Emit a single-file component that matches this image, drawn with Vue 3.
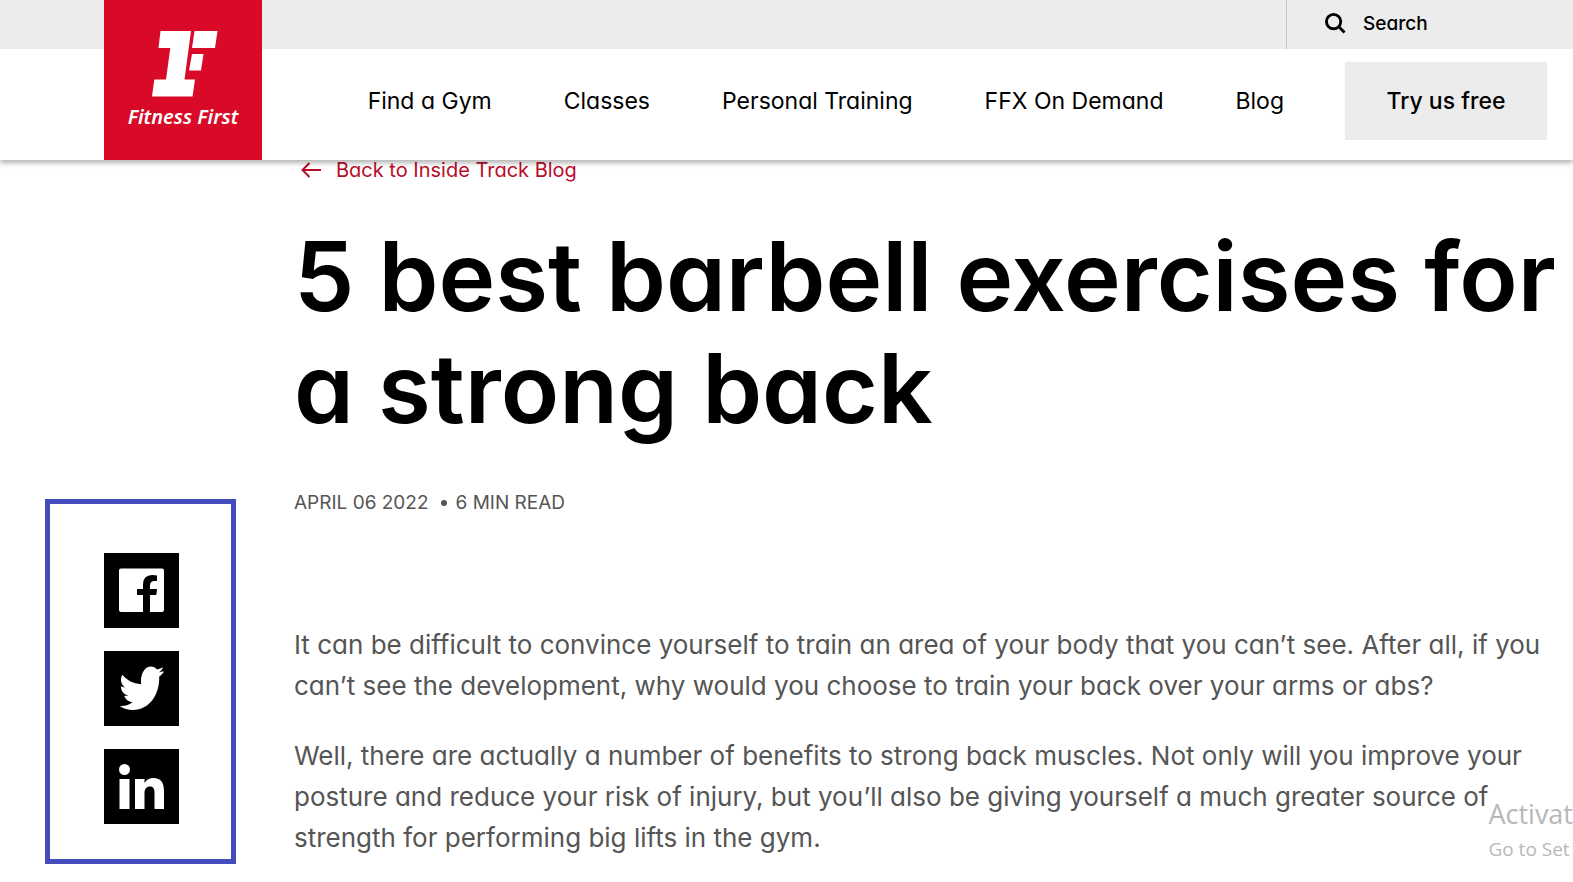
<script setup>
const links = ['Find a Gym', 'Classes', 'Personal Training', 'FFX On Demand', 'Blog']
const paragraphs = [
  'It can be difficult to convince yourself to train an area of your body that you can’t see. After all, if you can’t see the development, why would you choose to train your back over your arms or abs?',
  'Well, there are actually a number of benefits to strong back muscles. Not only will you improve your posture and reduce your risk of injury, but you’ll also be giving yourself a much greater source of strength for performing big lifts in the gym.',
]
const shares = [
  {
    name: 'Facebook',
    path: 'M17 15.5h41q2 0 2 2V57q0 2-2 2H46V42h6.3l.8-6H46v-3.500q0-4.500 4.500-4.500H53v-5.500q-2-.5-5-.5-9 0-9 10v4h-6v6h6v17H17q-2 0-2-2V17.500q0-2 2-2z',
  },
  {
    name: 'Twitter',
    path: 'M59.500 21.200c-1 1.500-2.700 3.200-4.300 4.300C55.800 44 45 59 29 59c-5 0-9.500-1.500-13.300-4 5 .5 9.300-.8 13-4-4 0-7.300-2.700-8.500-6.300 1.400.2 2.700.2 4-.2-4.400-1-7.300-4.700-7.300-9.300 1.300.7 2.700 1.100 4.100 1.200-4-3-5.200-8-2.700-12.600 4.800 5.700 11 8.900 18.900 9.400C35.800 25 40 15.500 46.500 15.500c2.700 0 5 1.100 6.700 2.900 2-.4 4-1.200 5.800-2.200-.7 2.100-2.100 3.900-4 5 1.800-.2 3-.5 4.500-1z',
  },
  {
    name: 'LinkedIn',
    path: 'M15.500 30h10v30h-10zM20.500 15a5.500 5.500 0 1 1 0 11 5.500 5.500 0 0 1 0-11zM31 30h9.500v4c2-3.500 5-5 9-5 7.500 0 10.500 5 10.500 13v18H50.500V44c0-4-1-6.500-4.500-6.500S40.500 40 40.500 44v16H31z',
  },
]
</script>

<template>
  <div class="page">
    <header class="header">
      <a class="logo" href="#" aria-label="Fitness First">
        <svg class="mark" viewBox="0 0 66 66" aria-hidden="true">
          <path d="M8.500 0H39l-6.500 48.500H43L40.500 65.500H0L2.300 48.500H14L18.300 17H6.500zM42.500 0H65.500L63 17H40zM40 23H51.500L49 39.500H37z" />
        </svg>
        <span class="wordmark">Fitness First</span>
      </a>
      <div class="topbar">
        <button class="search" type="button">
          <svg class="glass" viewBox="0 0 22 22" aria-hidden="true">
            <circle cx="9" cy="9" r="7.500" />
            <path d="M14.500 14.500L20.500 20.500" />
          </svg>
          Search
        </button>
      </div>
      <nav class="nav">
        <a v-for="link in links" :key="link" href="#">{{ link }}</a>
        <a class="cta" href="#">Try us free</a>
      </nav>
    </header>

    <main class="body">
      <aside class="share">
        <a v-for="s in shares" :key="s.name" class="tile" href="#" :aria-label="s.name">
          <svg viewBox="0 0 75 75" aria-hidden="true"><path :d="s.path" /></svg>
        </a>
      </aside>
      <article class="article">
        <a class="back" href="#">
          <svg class="arrow" viewBox="0 0 20 16" aria-hidden="true"><path d="M20 8H2M8.500 1L1.500 8l7 7" /></svg>
          Back to Inside Track Blog
        </a>
        <h1>5 best barbell exercises for a strong back</h1>
        <p class="meta"><span>APRIL 06 2022</span><span class="dot"></span><span>6 MIN READ</span></p>
        <p v-for="p in paragraphs" :key="p" class="text">{{ p }}</p>
      </article>
    </main>

    <div class="watermark">
      <div class="line-a">Activat</div>
      <div class="line-b">Go to Set</div>
    </div>
  </div>
</template>

<style>
body {
  background: #fff;
}
</style>

<style scoped>
.page {
  position: relative;
  min-height: 100vh;
  overflow: hidden;
  box-sizing: border-box;
  font-family: Inter, "Liberation Sans", sans-serif;
  font-feature-settings: "cv11";
  color: #000;
}
a {
  color: inherit;
  text-decoration: none;
}
.header {
  position: relative;
  display: grid;
  grid-template: 49px 111px / 262px 1fr;
  background: linear-gradient(#ececec 49px, #fff 49px);
  box-shadow: 0 3px 5px rgba(0, 0, 0, 0.3);
}
.logo {
  grid-row: 1 / 3;
  margin-left: 104px;
  display: flex;
  flex-direction: column;
  align-items: center;
  background: #d80a27;
  color: #fff;
}
.mark {
  width: 66px;
  height: 66px;
  margin: 31px 0 0 4px;
  fill: #fff;
}
.wordmark {
  font: italic 600 20px/28px "Noto Sans", sans-serif;
  margin-top: 6px;
}
.topbar {
  display: flex;
  justify-content: flex-end;
}
.search {
  width: 287px;
  padding: 0 0 2px 38px;
  display: flex;
  align-items: center;
  gap: 17px;
  border: 0;
  border-left: 1px solid #c4c4c4;
  background: none;
  font: 500 19px/24px Inter, sans-serif;
  font-feature-settings: inherit;
}
.glass {
  width: 21px;
  height: 21px;
  fill: none;
  stroke: #000;
  stroke-width: 3;
}
.nav {
  display: flex;
  align-items: center;
  justify-content: flex-end;
  gap: 72px;
  padding: 0 26px 7px 0;
  font-size: 23px;
  line-height: 30px;
  white-space: nowrap;
}
.cta {
  width: 202px;
  margin-left: -11px;
  line-height: 78px;
  text-align: center;
  font-weight: 500;
  background: #ececec;
}
.body {
  display: grid;
  grid-template-columns: 191px 1fr;
  column-gap: 58px;
  padding: 0 12px 0 45px;
}
.share {
  align-self: start;
  display: flex;
  flex-direction: column;
  gap: 23px;
  margin-top: 339px;
  padding: 49px 0 35px 54px;
  border: 5px solid #444bbd;
}
.tile {
  width: 75px;
  height: 75px;
  background: #000;
}
.tile svg {
  display: block;
  fill: #fff;
}
.back {
  display: flex;
  align-items: center;
  gap: 15px;
  padding-left: 7px;
  font-size: 20px;
  line-height: 20px;
  color: #b80c28;
}
.arrow {
  width: 20px;
  height: 16px;
  fill: none;
  stroke: currentColor;
  stroke-width: 2;
}
h1 {
  margin: 40px 0 0;
  font-size: 96px;
  line-height: 112px;
  font-weight: 600;
}
.meta {
  display: flex;
  align-items: center;
  margin: 44px 0 106px;
  font-size: 19px;
  line-height: 30px;
  color: #555;
}
.dot {
  width: 6px;
  height: 6px;
  margin: 0 9px 0 12px;
  border-radius: 50%;
  background: #555;
}
.text {
  margin: 0 0 29px;
  font-size: 26px;
  line-height: 41px;
  color: #555;
}
.text:last-child {
  margin-bottom: 0;
}
.watermark {
  position: absolute;
  right: 0;
  top: 796px;
  font-family: "Open Sans", sans-serif;
  white-space: nowrap;
  color: #b8b8b8;
}
.line-a {
  font-size: 27px;
  line-height: 36px;
}
.line-b {
  font-size: 19px;
  line-height: 34px;
}
</style>
